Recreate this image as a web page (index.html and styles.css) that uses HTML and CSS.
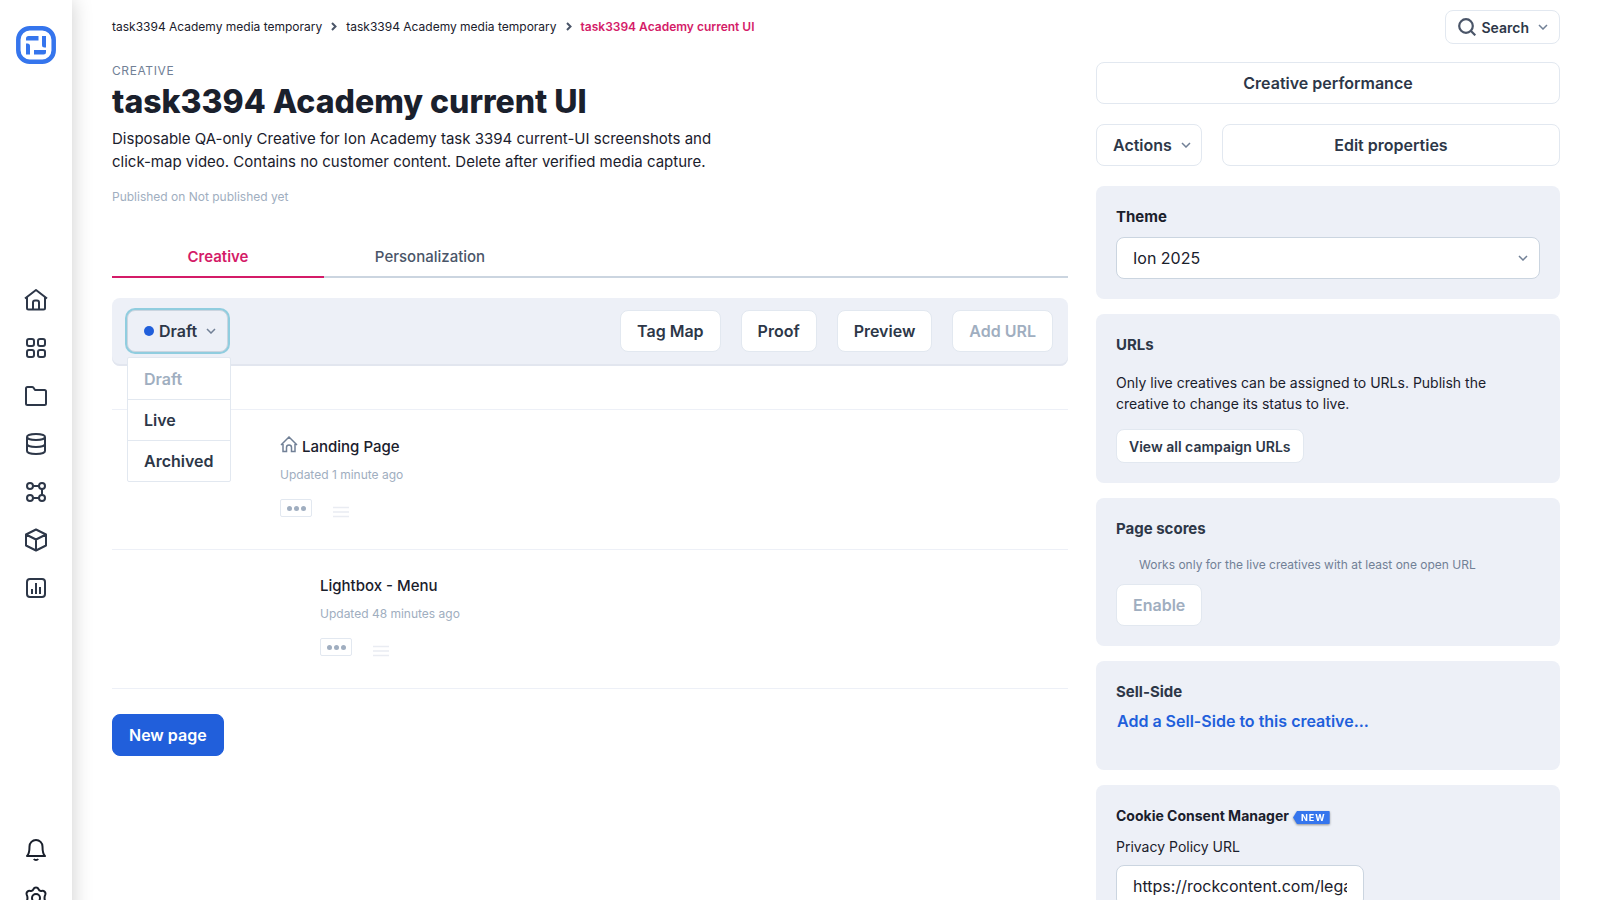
FILE: index.html
```html
<!DOCTYPE html>
<html lang="en">
<head>
  <meta charset="UTF-8">
  <meta name="viewport" content="width=device-width, initial-scale=1.0">
  <title>task3394 Academy current UI</title>
  <link rel="stylesheet" href="styles.css">
</head>
<body>
  <svg class="sprite" aria-hidden="true">
    <symbol id="chevron-down" viewBox="0 0 10 6"><path d="M1 1l4 4 4-4"/></symbol>
    <symbol id="chevron-right" viewBox="0 0 6 9"><path d="M1 1l3.500 3.500L1 8"/></symbol>
    <symbol id="home" viewBox="0 0 24 24"><path d="M1 10.500L12 2l11 8.500M3 9v11a1.500 1.500 0 0 0 1.500 1.500h15A1.500 1.500 0 0 0 21 20V9M9 21.500v-7a2 2 0 0 1 2-2h2a2 2 0 0 1 2 2v7"/></symbol>
    <symbol id="burger" viewBox="0 0 16 12"><path d="M0 1.500h16M0 6h16M0 10.500h16"/></symbol>
  </svg>

  <aside class="sidebar">
    <a class="logo" href="#" aria-label="Ion">
      <svg viewBox="0 0 40 38" width="40" height="38">
        <rect class="ring" x="2.300" y="2.300" width="35.400" height="33.400" rx="11.500"/>
        <path class="mark" d="M10 14.500v-2a2.500 2.500 0 0 1 2.500-2.500h10v4.500zM26 10h4v11.500h-1.500a2.500 2.500 0 0 1-2.500-2.500zM10 17.500h1.500a2.500 2.500 0 0 1 2.500 2.500v8.500h-4zM18 24h12v2a2.500 2.500 0 0 1-2.500 2.500H18z"/>
      </svg>
    </a>
    <nav class="side-nav side-nav-main" aria-label="Main">
      <a href="#" aria-label="Home"><svg><use href="#home"/></svg></a>
      <a href="#" aria-label="Creatives"><svg viewBox="0 0 24 24"><rect x="3" y="3" width="7" height="7" rx="2"/><rect x="14" y="3" width="7" height="7" rx="2"/><rect x="3" y="14" width="7" height="7" rx="2"/><rect x="14" y="14" width="7" height="7" rx="2"/></svg></a>
      <a href="#" aria-label="Library"><svg viewBox="0 0 24 24"><path d="M2 19.500v-15A1.500 1.500 0 0 1 3.500 3H8a2 2 0 0 1 1.500.7L11 6h9.500A1.500 1.500 0 0 1 22 7.500v12a1.500 1.500 0 0 1-1.500 1.500h-17A1.500 1.500 0 0 1 2 19.500z"/></svg></a>
      <a href="#" aria-label="Data"><svg viewBox="0 0 24 24"><ellipse cx="12" cy="5" rx="9" ry="3"/><path d="M3 5v14c0 1.800 4 3 9 3s9-1.200 9-3V5M3 12c0 1.800 4 3 9 3s9-1.200 9-3"/></svg></a>
      <a href="#" aria-label="Integrations"><svg viewBox="0 0 24 24"><circle cx="6" cy="6" r="3"/><circle cx="18" cy="6" r="3"/><circle cx="6" cy="18" r="3"/><circle cx="18" cy="18" r="3"/><path d="M9 6h6M18 9v6M9 18h6"/></svg></a>
      <a href="#" aria-label="Components"><svg viewBox="0 0 24 24"><path d="M12 1.500l10 5v11l-10 5-10-5v-11zM2 6.500l10 5 10-5M12 11.500v11"/></svg></a>
      <a href="#" aria-label="Reports"><svg viewBox="0 0 24 24"><rect x="3" y="3" width="18" height="18" rx="3"/><path d="M8 13v5M12 7v11M16 11v7"/></svg></a>
    </nav>
    <nav class="side-nav side-nav-bottom" aria-label="Account">
      <a href="#" aria-label="Notifications"><svg viewBox="0 0 24 24"><path d="M3 18c1.800-1.500 2.500-5 2.500-9.500a6.500 6.500 0 0 1 13 0c0 4.500.7 8 2.500 9.500zM9.800 21c1 1.300 3.400 1.300 4.400 0"/></svg></a>
      <a href="#" aria-label="Settings"><svg viewBox="0 0 24 24"><circle cx="12" cy="12" r="4"/><path d="M9.500 3.200C10.300 1 13.700 1 14.500 3.200c.5 1.400 1.600 2 3 1.700 2.600-.5 4.700 1.600 3.700 4-.8 1.800-.8 4.400 0 6.200 1 2.400-1.100 4.500-3.700 4-1.400-.3-2.500.3-3 1.700-.8 2.200-4.200 2.200-5 0-.5-1.400-1.600-2-3-1.700-2.600.5-4.700-1.600-3.700-4 .8-1.800.8-4.400 0-6.200-1-2.400 1.100-4.500 3.700-4 1.400.3 2.500-.3 3-1.700z"/></svg></a>
    </nav>
  </aside>

  <div class="page">
    <header class="topbar">
      <nav class="breadcrumb" aria-label="Breadcrumb">
        <a href="#">task3394 Academy media temporary</a>
        <svg><use href="#chevron-right"/></svg>
        <a href="#">task3394 Academy media temporary</a>
        <svg><use href="#chevron-right"/></svg>
        <a class="current" href="#">task3394 Academy current UI</a>
      </nav>
      <button class="btn btn-small search" type="button">
        <svg class="search-icon" viewBox="0 0 18 18"><circle cx="8" cy="8" r="6.800"/><path d="M12.500 12.500l4.800 4.800"/></svg>
        Search
        <svg class="chevron"><use href="#chevron-down"/></svg>
      </button>
    </header>

    <div class="columns">
      <main>
        <p class="kicker">Creative</p>
        <h1>task3394 Academy current UI</h1>
        <p class="description">Disposable QA-only Creative for Ion Academy task 3394 current-UI screenshots and click-map video. Contains no customer content. Delete after verified media capture.</p>
        <p class="published">Published on Not published yet</p>

        <nav class="tabs" aria-label="Creative sections">
          <a class="tab active" href="#">Creative</a>
          <a class="tab" href="#">Personalization</a>
        </nav>

        <div class="toolbar">
          <div class="status">
            <button class="btn status-btn" type="button" aria-expanded="true">
              <span class="dot"></span>Draft
              <svg class="chevron"><use href="#chevron-down"/></svg>
            </button>
            <div class="status-menu">
              <button type="button" disabled>Draft</button>
              <button type="button">Live</button>
              <button type="button">Archived</button>
            </div>
          </div>
          <div class="toolbar-actions">
            <button class="btn" type="button">Tag Map</button>
            <button class="btn" type="button">Proof</button>
            <button class="btn" type="button">Preview</button>
            <button class="btn" type="button" disabled>Add URL</button>
          </div>
        </div>

        <ul class="page-list">
          <li class="page-item">
            <h2><svg class="home-icon" viewBox="0 0 18 18"><path d="M1 9l8-8 8 8M3 8v7.500h3.500v-4a2.500 2.500 0 0 1 5 0v4H15V8"/></svg>Landing Page</h2>
            <p class="updated">Updated 1 minute ago</p>
            <div class="item-tools">
              <button class="more" type="button" aria-label="More"><i></i><i></i><i></i></button>
              <svg class="burger"><use href="#burger"/></svg>
            </div>
          </li>
          <li class="page-item nested">
            <h2>Lightbox - Menu</h2>
            <p class="updated">Updated 48 minutes ago</p>
            <div class="item-tools">
              <button class="more" type="button" aria-label="More"><i></i><i></i><i></i></button>
              <svg class="burger"><use href="#burger"/></svg>
            </div>
          </li>
        </ul>

        <button class="btn btn-primary" type="button">New page</button>
      </main>

      <aside class="details">
        <button class="btn" type="button">Creative performance</button>
        <div class="action-row">
          <button class="btn actions" type="button">Actions <svg class="chevron"><use href="#chevron-down"/></svg></button>
          <button class="btn edit" type="button">Edit properties</button>
        </div>

        <section class="card">
          <label class="card-title dark" for="theme">Theme</label>
          <div class="select">
            <select id="theme"><option>Ion 2025</option></select>
            <svg class="chevron"><use href="#chevron-down"/></svg>
          </div>
        </section>

        <section class="card">
          <h3 class="card-title">URLs</h3>
          <p class="card-text">Only live creatives can be assigned to URLs. Publish the creative to change its status to live.</p>
          <button class="btn btn-small" type="button">View all campaign URLs</button>
        </section>

        <section class="card">
          <h3 class="card-title">Page scores</h3>
          <p class="card-note">Works only for the live creatives with at least one open URL</p>
          <button class="btn" type="button" disabled>Enable</button>
        </section>

        <section class="card sell-side">
          <h3 class="card-title">Sell-Side</h3>
          <a class="card-link" href="#">Add a Sell-Side to this creative...</a>
        </section>

        <section class="card">
          <h3 class="card-title small">Cookie Consent Manager <span class="badge"><span class="badge-text">NEW</span></span></h3>
          <label class="field-label" for="privacy">Privacy Policy URL</label>
          <input class="text-input" id="privacy" type="text" value="https://rockcontent.com/legal/privacy-policy">
        </section>
      </aside>
    </div>
  </div>
</body>
</html>
```
FILE: styles.css
```css
* {
  box-sizing: border-box;
}
body {
  display: flex;
  height: 100vh;
  margin: 0;
  overflow: hidden;
  font-family: Inter, "Liberation Sans", sans-serif;
  font-size: 16px;
  color: #1a202c;
  background-color: #fff;
}
h1, h2, h3, p, ul {
  margin: 0;
  padding: 0;
}
a {
  color: inherit;
  text-decoration: none;
}
button, input, select {
  font: inherit;
}
svg {
  fill: none;
  stroke: currentColor;
  flex-shrink: 0;
}
.sprite {
  position: absolute;
  width: 0;
  height: 0;
}

/* sidebar */
.sidebar {
  display: flex;
  flex-direction: column;
  justify-content: space-between;
  align-items: center;
  flex: 0 0 72px;
  height: calc(100vh + 22px);
  padding-top: 26px;
  box-shadow: 0 0 20px rgba(0, 0, 0, 0.2);
}
.logo svg {
  display: block;
}
.logo .ring {
  stroke: #3575ed;
  stroke-width: 4.5;
}
.logo .mark {
  fill: #3575ed;
  stroke: none;
}
.side-nav {
  color: #2d3748;
}
.side-nav-main {
  margin-bottom: 2px;
}
.side-nav-bottom {
  color: #1a202c;
}
.side-nav a {
  display: block;
  padding: 12px;
}
.side-nav svg {
  display: block;
  width: 24px;
  height: 24px;
  stroke-width: 2;
  stroke-linejoin: round;
}

/* page */
.page {
  flex: 1;
  min-width: 0;
  padding: 10px 40px 0;
}
.topbar {
  display: flex;
  justify-content: space-between;
  align-items: flex-start;
  height: 34px;
}
.breadcrumb {
  display: flex;
  align-items: center;
  gap: 9px;
  height: 32px;
  font-size: 12px;
}
.breadcrumb svg {
  width: 6px;
  height: 9px;
  stroke: #4a5568;
  stroke-width: 2;
}
.breadcrumb .current {
  font-weight: 600;
  color: #d41b68;
}
.columns {
  display: grid;
  grid-template-columns: minmax(0, 1fr) 464px;
  gap: 28px;
  margin-top: 18px;
}

/* buttons */
.btn {
  display: inline-flex;
  justify-content: center;
  align-items: center;
  height: 42px;
  padding: 0 16px;
  background-color: #fff;
  color: #2d3748;
  font-weight: 600;
  border: 1px solid #e2e8f0;
  border-radius: 8px;
  white-space: nowrap;
}
.btn:disabled {
  color: #a0aec0;
}
.btn-small {
  height: 34px;
  padding: 0 12px;
  font-size: 14px;
}
.btn-primary {
  margin-top: 25px;
  background-color: #215fdb;
  border-color: #215fdb;
  color: #fff;
}
.chevron {
  width: 10px;
  height: 6px;
  margin-left: 9px;
  color: #718096;
  stroke-width: 1.5;
}
.search {
  padding-right: 11px;
}
.search-icon {
  width: 18px;
  height: 18px;
  margin-right: 5px;
  color: #4a5568;
  stroke-width: 2.2;
}

/* heading */
.kicker {
  font-size: 12px;
  line-height: 18px;
  letter-spacing: 0.05em;
  text-transform: uppercase;
  color: #718096;
}
h1 {
  font-size: 32px;
  line-height: 44px;
  font-weight: 800;
}
.description {
  max-width: 620px;
  margin-top: 3px;
  font-size: 15px;
  line-height: 23px;
}
.published {
  margin-top: 15px;
  font-size: 12px;
  line-height: 18px;
  color: #a0aec0;
}

/* tabs */
.tabs {
  display: flex;
  margin-top: 30px;
  box-shadow: inset 0 -2px #cbd5e0;
}
.tab {
  width: 212px;
  height: 42px;
  font-size: 15px;
  font-weight: 500;
  line-height: 42px;
  text-align: center;
  color: #4a5568;
}
.tab.active {
  font-weight: 600;
  color: #d41b68;
  border-bottom: 2px solid #d41b68;
}

/* toolbar */
.toolbar {
  display: flex;
  justify-content: space-between;
  align-items: center;
  height: 68px;
  margin-top: 20px;
  padding: 0 15px 2px;
  background-color: #edf0f7;
  border-radius: 8px;
  box-shadow: inset 0 -2px #e2e6ef;
}
.toolbar-actions {
  display: flex;
  gap: 20px;
}
.status {
  position: relative;
}
.status-btn {
  padding: 0 11px 0 16px;
  background-color: #edf0f7;
  border-color: #cbd5e0;
  box-shadow: 0 0 0 2px #90cddf;
}
.dot {
  width: 10px;
  height: 10px;
  margin-right: 5px;
  background-color: #215fdb;
  border-radius: 50%;
}
.status-menu {
  position: absolute;
  top: 47px;
  left: 0;
  min-width: 104px;
  background-color: #fff;
  border: 1px solid #e2e8f0;
  border-radius: 2px;
}
.status-menu button {
  display: block;
  width: 100%;
  height: 41px;
  padding: 0 16px;
  background: none;
  border: 0;
  color: #2d3748;
  font-weight: 600;
  text-align: left;
}
.status-menu button + button {
  border-top: 1px solid #e2e8f0;
}
.status-menu button:disabled {
  color: #a0aec0;
}

/* list of pages */
.page-list {
  margin-top: 43px;
  list-style: none;
  border-top: 1px solid #edf0f7;
}
.page-item {
  height: 140px;
  padding: 26px 0 0 168px;
  border-bottom: 1px solid #edf0f7;
}
.page-item.nested {
  height: 139px;
  padding-top: 25px;
  padding-left: 208px;
}
.page-item h2 {
  display: flex;
  gap: 4px;
  font-size: 15px;
  line-height: 22px;
  font-weight: 500;
}
.home-icon {
  width: 18px;
  height: 18px;
  color: #718096;
  stroke-width: 1.5;
}
.updated {
  margin-top: 8px;
  font-size: 12px;
  line-height: 18px;
  color: #a0aec0;
}
.item-tools {
  display: flex;
  align-items: flex-start;
  gap: 21px;
  margin-top: 15px;
}
.more {
  display: flex;
  justify-content: center;
  align-items: center;
  gap: 2px;
  width: 32px;
  height: 18px;
  padding: 0;
  background-color: #fff;
  border: 1px solid #e2e8f0;
  border-radius: 2px;
}
.more i {
  width: 5px;
  height: 5px;
  background-color: #a0aec0;
  border-radius: 50%;
}
.burger {
  width: 16px;
  height: 12px;
  margin-top: 7px;
  color: #e9ecf2;
  stroke-width: 1.5;
}

/* right column */
.details {
  display: flex;
  flex-direction: column;
}
.action-row {
  display: flex;
  gap: 20px;
  margin: 20px 0 5px;
}
.actions {
  padding-right: 10px;
}
.edit {
  flex: 1;
}
.card {
  margin-top: 15px;
  padding: 20px;
  background-color: #edf0f7;
  border-radius: 8px;
}
.card-title {
  display: block;
  font-size: 15px;
  line-height: 22px;
  font-weight: 700;
  color: #2d3748;
}
.card-title.dark {
  color: #1a202c;
}
.card-title.small {
  display: flex;
  align-items: center;
  gap: 4px;
  font-size: 14px;
  color: #1a202c;
}
.select {
  position: relative;
  margin-top: 9px;
}
.select select, .text-input {
  display: block;
  height: 42px;
  padding: 0 16px;
  background-color: #fff;
  color: #1a202c;
  border: 1px solid #cbd5e0;
  border-radius: 8px;
}
.select select {
  width: 100%;
  appearance: none;
}
.select .chevron {
  position: absolute;
  top: 18px;
  right: 12px;
}
.card-text {
  margin: 16px 0 15px;
  font-size: 14px;
  line-height: 21px;
}
.card-note {
  margin: 16px 0 10px 23px;
  font-size: 12px;
  line-height: 18px;
  color: #718096;
}
.sell-side {
  padding-bottom: 37px;
}
.card-link {
  display: block;
  margin-top: 6px;
  padding-left: 1px;
  line-height: 24px;
  font-weight: 600;
  color: #215fdb;
}
.badge {
  margin-top: 3px;
  filter: drop-shadow(0 1px 1px rgba(0, 0, 0, 0.4));
}
.badge-text {
  display: block;
  padding: 0 4px 0 8px;
  background-color: #3575ed;
  border-radius: 1px;
  clip-path: polygon(4px 0, 100% 0, 100% 100%, 4px 100%, 0 50%);
  color: #fff;
  font-size: 9px;
  line-height: 13px;
  letter-spacing: 1px;
}
.field-label {
  display: block;
  margin: 9px 0 8px;
  font-size: 14px;
  line-height: 21px;
}
.text-input {
  width: 248px;
}
```
